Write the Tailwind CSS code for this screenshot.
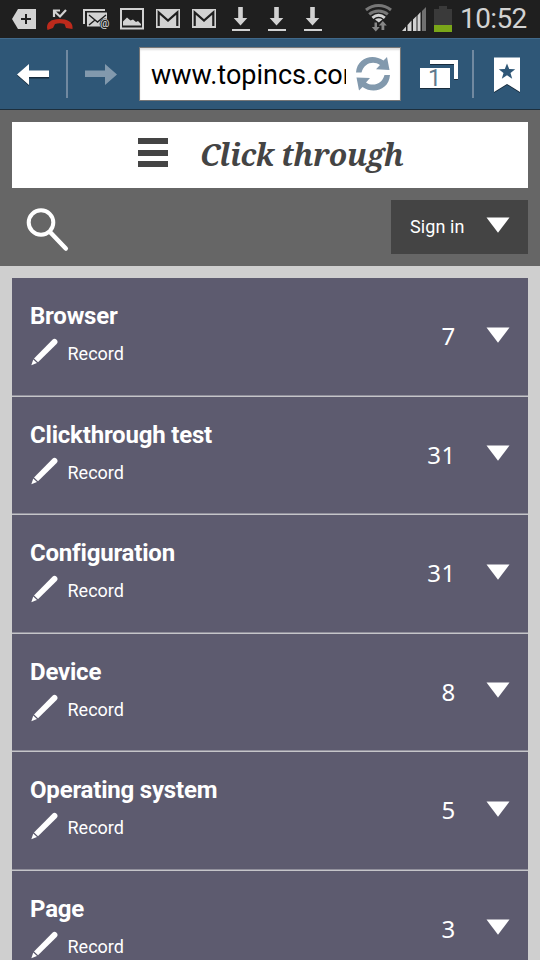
<!DOCTYPE html>
<html lang="en">
<head>
<meta charset="utf-8">
<title>Click through</title>
<script src="https://cdn.jsdelivr.net/npm/@tailwindcss/browser@4"></script>
</head>
<body class="w-[540px] h-[960px] overflow-hidden bg-[#cfcfcf] font-['Roboto',sans-serif]">
<svg class="hidden">
  <symbol id="pencil" viewBox="0 0 28 28"><path d="M4 20.500 22.500 1.800a2.900 2.900 0 0 1 4.100 4.100L8 24.200z" fill="#fff"/><path d="M3.300 21.500 7 25 1.300 27.200z" fill="#fff"/><path d="M3.700 20.900l3.900 3.700" stroke="#5d5b6f" stroke-width=".5"/></symbol>
  <symbol id="tri" viewBox="0 0 24 16"><path d="M.5.500h23L12 15.800z" fill="#fff"/></symbol>
  <symbol id="gmail" viewBox="0 0 36 38"><path d="M6 9h24v19H6z" fill="#d2d2d2"/><path d="M8.700 26V12.500L18 20.500l9.300-8V26" fill="none" stroke="#1f1f1f" stroke-width="2.200"/></symbol>
  <symbol id="down" viewBox="0 0 36 38"><path d="M16.200 7h4.600v11h4.500L18.500 25.500 11.700 18h4.500zM10 29h18v2H10z" fill="#d2d2d2"/></symbol>
</svg>

<header class="h-[38px] bg-[#1f1f1f] flex pl-[6px]">
  <svg class="w-9 h-[38px]" viewBox="0 0 36 38"><path d="M12 9h18v20H12L6 19z" fill="#d2d2d2"/><path d="M20 14v10M15 19h10" stroke="#1f1f1f" stroke-width="2"/></svg>
  <svg class="w-9 h-[38px]" viewBox="0 0 36 38"><path d="M5 27.500c0-5 4-8.500 12.500-8.500 8 0 13 3 13 8V29l-6.500-1-1.500-4c-3-1-6.500-1-9.500 0L11 28l-5.500 2z" fill="#bd2a1c"/><path d="M12 17v-6.500h6M12 11l6 5.500 6-6.500" fill="none" stroke="#d2d2d2" stroke-width="2.200"/></svg>
  <svg class="w-9 h-[38px]" viewBox="0 0 36 38"><path d="M6 24V10h21" fill="none" stroke="#d2d2d2" stroke-width="2"/><path d="M9 12.500h20V20l-6 6.500H9z" fill="#d2d2d2"/><path d="M11 15l8.500 7 8.500-7M11 25l6-5" fill="none" stroke="#1f1f1f" stroke-width="1.400"/><circle cx="27" cy="24" r="5.400" fill="#1f1f1f"/><text x="22" y="26.500" font-size="10.500" font-weight="500" fill="#d2d2d2" font-family="Roboto">@</text></svg>
  <svg class="w-9 h-[38px]" viewBox="0 0 36 38"><path d="M7 9h22v19.500H7z" fill="none" stroke="#d2d2d2" stroke-width="2"/><path d="M9 25.500v-4l4-4 3.500 3 2.500-1 3 2.500 2-1 3 3v1.500z" fill="#d2d2d2"/></svg>
  <svg class="w-9 h-[38px]"><use href="#gmail"/></svg>
  <svg class="w-9 h-[38px]"><use href="#gmail"/></svg>
  <svg class="w-9 h-[38px]"><use href="#down"/></svg>
  <svg class="w-9 h-[38px]"><use href="#down"/></svg>
  <svg class="w-9 h-[38px]"><use href="#down"/></svg>
  <svg class="w-[124px] h-[38px]" viewBox="330 0 124 38">
    <g fill="none" stroke-width="3"><path d="M366 10c7.500-6 17.500-6 25 0M369.200 14.300c5.500-4.500 13.100-4.500 18.600 0" stroke="#777"/><path d="M372.400 17.800c4-3.200 8.400-3.200 12.400 0" stroke="#d2d2d2"/></g>
    <path d="M375 19.500c2.500-1.800 5-1.800 7.500 0l-3.700 3z" fill="#d2d2d2"/>
    <path d="M374.500 22.500h2.500v4.500h2.800l-4 4.500-4-4.500h2.700zM381.500 30v-4.500h-2.700l4-4.500 4 4.500h-2.500V30z" fill="#888"/>
    <path d="M402 31l4-4.500V31zM407.500 31v-6l4-4.500V31zM413 31V19.500l3.500-3.500v15zM417.500 31V15.500l3-3.500v19z" fill="#d2d2d2"/><path d="M422 31V11l4-4v24z" fill="#707070"/>
    <path d="M434 9h5V6h8v3h5v16h-18z" fill="#3a3a3a"/><path d="M434 25h18v7h-18z" fill="#7aa619"/>
  </svg>
  <span class="ml-[6px] text-[28px] leading-[38px] text-[#d2d2d2] whitespace-nowrap tracking-[-0.6px]">10:52</span>
</header>

<nav class="h-[72px] bg-[#2f5777] border-t border-t-[#41698a] border-b border-b-[#1d2f3d] flex items-center">
  <svg class="w-[139px] h-[70px] shrink-0" viewBox="0 39 139 70">
    <path d="M17 75.500 29 65v6.500h20v7H29V86z" fill="#182c3d"/><path d="M17 74.500 29 64v6.500h20v6.500H29V85z" fill="#fff"/>
    <path d="M66 50h2v48h-2z" fill="#7189a0"/>
    <path d="M117 74.500 105 64v6.500H85v6.500h20v8z" fill="#8299ad"/>
  </svg>
  <div class="w-[262px] h-[54px] bg-white border border-[#777] shadow-[inset_0_2px_2px_#ddd] flex items-center pl-[11px] shrink-0">
    <div class="w-[195px] overflow-hidden whitespace-nowrap text-[27px] text-black leading-[40px] tracking-[0px] pt-px">www.topincs.com</div>
    <svg class="w-[36px] h-[36px] ml-[9px] shrink-0" viewBox="355 56 36 36">
      <g id="half"><path d="M356 72.500C357 57.500 373 53 383.500 60.500L387 57l2.500 13-13.500-.700 4-4.300C373.500 60.500 364 63 361.500 72.500z" fill="#8299ad"/></g>
      <use href="#half" transform="rotate(180 373 73.700)"/>
    </svg>
  </div>
  <svg class="w-[139px] h-[70px] shrink-0" viewBox="401 39 139 70">
    <path d="M430 61h28v19h-4V65h-24z" fill="#182c3d"/><path d="M430 60h28v19h-4V64h-24z" fill="#fff"/>
    <path d="M420 69h30v20h-30z" fill="#182c3d"/><path d="M420 68h30v20h-30z" fill="#fff"/>
    <text x="428" y="86" font-size="23.500" fill="#60798e" font-family="Roboto">1</text>
    <path d="M472 50h2v48h-2z" fill="#7189a0"/>
    <path d="M494 59h26v34l-13-8-13 8z" fill="#182c3d"/><path d="M494 57.500h26V92l-13-8-13 8z" fill="#fff"/>
    <path d="M507 63.500l2.200 5.500 6 .2-4.700 3.700 1.700 5.800-5.200-3.400-5.200 3.400 1.700-5.800-4.700-3.700 6-.2z" fill="#2f5777"/>
  </svg>
</nav>

<section class="h-[156px] bg-[#666] px-3 pt-3">
  <div class="h-[66px] bg-white flex items-center pl-[126px]">
    <div class="w-[30px] h-[29px] flex flex-col justify-between -mt-[5px]"><i class="h-[6px] bg-[#444]"></i><i class="h-[6px] bg-[#444]"></i><i class="h-[6px] bg-[#444]"></i></div>
    <h1 class="ml-[32px] -mt-[2px] font-['Droid_Serif','Noto_Serif','DejaVu_Serif',serif] font-bold italic text-[30px] text-[#444] whitespace-nowrap tracking-[-0.25px]">Click through</h1>
  </div>
  <div class="flex justify-between pt-3">
    <svg class="w-[60px] h-[54px]" viewBox="12 200 60 54"><circle cx="41" cy="222.500" r="12.300" fill="none" stroke="#fff" stroke-width="4"/><path d="M50 232l15.800 16.500" stroke="#fff" stroke-width="4.500" stroke-linecap="round"/></svg>
    <button class="w-[137px] h-[54px] bg-[#444] text-white flex items-center justify-between pl-[19px] pr-[18px]"><span class="text-[18px] -mt-[2px] tracking-[0.1px]">Sign in</span><svg class="w-6 h-4 -mt-[4px]"><use href="#tri"/></svg></button>
  </div>
</section>

<main class="px-3 pt-3 text-white">
  <article class="h-[118.500px] bg-[#5d5b6f] shadow-[inset_0_-1.500px_0_#c5c5c9] flex pl-[18px] pr-[18px]">
    <div class="flex-1"><h2 class="pt-[22px] text-[24px] leading-[32px] font-bold tracking-[-0.2px]">Browser</h2><div class="flex items-start pt-[6px]"><svg class="w-7 h-7"><use href="#pencil"/></svg><span class="ml-[9.500px] text-[18px] leading-[31px]">Record</span></div></div>
    <span class="pt-[42px] leading-[32px] text-[24px] tracking-[0.7px] mr-[30px] font-['Noto_Sans',sans-serif]">7</span><svg class="w-6 h-4 mt-[48.600px]"><use href="#tri"/></svg>
  </article>
  <article class="h-[118.500px] bg-[#5d5b6f] shadow-[inset_0_-1.500px_0_#c5c5c9] flex pl-[18px] pr-[18px]">
    <div class="flex-1"><h2 class="pt-[22px] text-[24px] leading-[32px] font-bold tracking-[-0.2px]">Clickthrough test</h2><div class="flex items-start pt-[6px]"><svg class="w-7 h-7"><use href="#pencil"/></svg><span class="ml-[9.500px] text-[18px] leading-[31px]">Record</span></div></div>
    <span class="pt-[42px] leading-[32px] text-[24px] tracking-[0.7px] mr-[30px] font-['Noto_Sans',sans-serif]">31</span><svg class="w-6 h-4 mt-[48.400px]"><use href="#tri"/></svg>
  </article>
  <article class="h-[118.500px] bg-[#5d5b6f] shadow-[inset_0_-1.500px_0_#c5c5c9] flex pl-[18px] pr-[18px]">
    <div class="flex-1"><h2 class="pt-[22px] text-[24px] leading-[32px] font-bold tracking-[-0.2px]">Configuration</h2><div class="flex items-start pt-[6px]"><svg class="w-7 h-7"><use href="#pencil"/></svg><span class="ml-[9.500px] text-[18px] leading-[31px]">Record</span></div></div>
    <span class="pt-[42px] leading-[32px] text-[24px] tracking-[0.7px] mr-[30px] font-['Noto_Sans',sans-serif]">31</span><svg class="w-6 h-4 mt-[48.600px]"><use href="#tri"/></svg>
  </article>
  <article class="h-[118.500px] bg-[#5d5b6f] shadow-[inset_0_-1.500px_0_#c5c5c9] flex pl-[18px] pr-[18px]">
    <div class="flex-1"><h2 class="pt-[22px] text-[24px] leading-[32px] font-bold tracking-[-0.2px]">Device</h2><div class="flex items-start pt-[6px]"><svg class="w-7 h-7"><use href="#pencil"/></svg><span class="ml-[9.500px] text-[18px] leading-[31px]">Record</span></div></div>
    <span class="pt-[42px] leading-[32px] text-[24px] tracking-[0.7px] mr-[30px] font-['Noto_Sans',sans-serif]">8</span><svg class="w-6 h-4 mt-[48.400px]"><use href="#tri"/></svg>
  </article>
  <article class="h-[118.500px] bg-[#5d5b6f] shadow-[inset_0_-1.500px_0_#c5c5c9] flex pl-[18px] pr-[18px]">
    <div class="flex-1"><h2 class="pt-[22px] text-[24px] leading-[32px] font-bold tracking-[-0.2px]">Operating system</h2><div class="flex items-start pt-[6px]"><svg class="w-7 h-7"><use href="#pencil"/></svg><span class="ml-[9.500px] text-[18px] leading-[31px]">Record</span></div></div>
    <span class="pt-[42px] leading-[32px] text-[24px] tracking-[0.7px] mr-[30px] font-['Noto_Sans',sans-serif]">5</span><svg class="w-6 h-4 mt-[48.600px]"><use href="#tri"/></svg>
  </article>
  <article class="h-[118.500px] bg-[#5d5b6f] flex pl-[18px] pr-[18px]">
    <div class="flex-1"><h2 class="pt-[22px] text-[24px] leading-[32px] font-bold tracking-[-0.2px]">Page</h2><div class="flex items-start pt-[6px]"><svg class="w-7 h-7"><use href="#pencil"/></svg><span class="ml-[9.500px] text-[18px] leading-[31px]">Record</span></div></div>
    <span class="pt-[42px] leading-[32px] text-[24px] tracking-[0.7px] mr-[30px] font-['Noto_Sans',sans-serif]">3</span><svg class="w-6 h-4 mt-[48.400px]"><use href="#tri"/></svg>
  </article>
</main>
</body>
</html>
